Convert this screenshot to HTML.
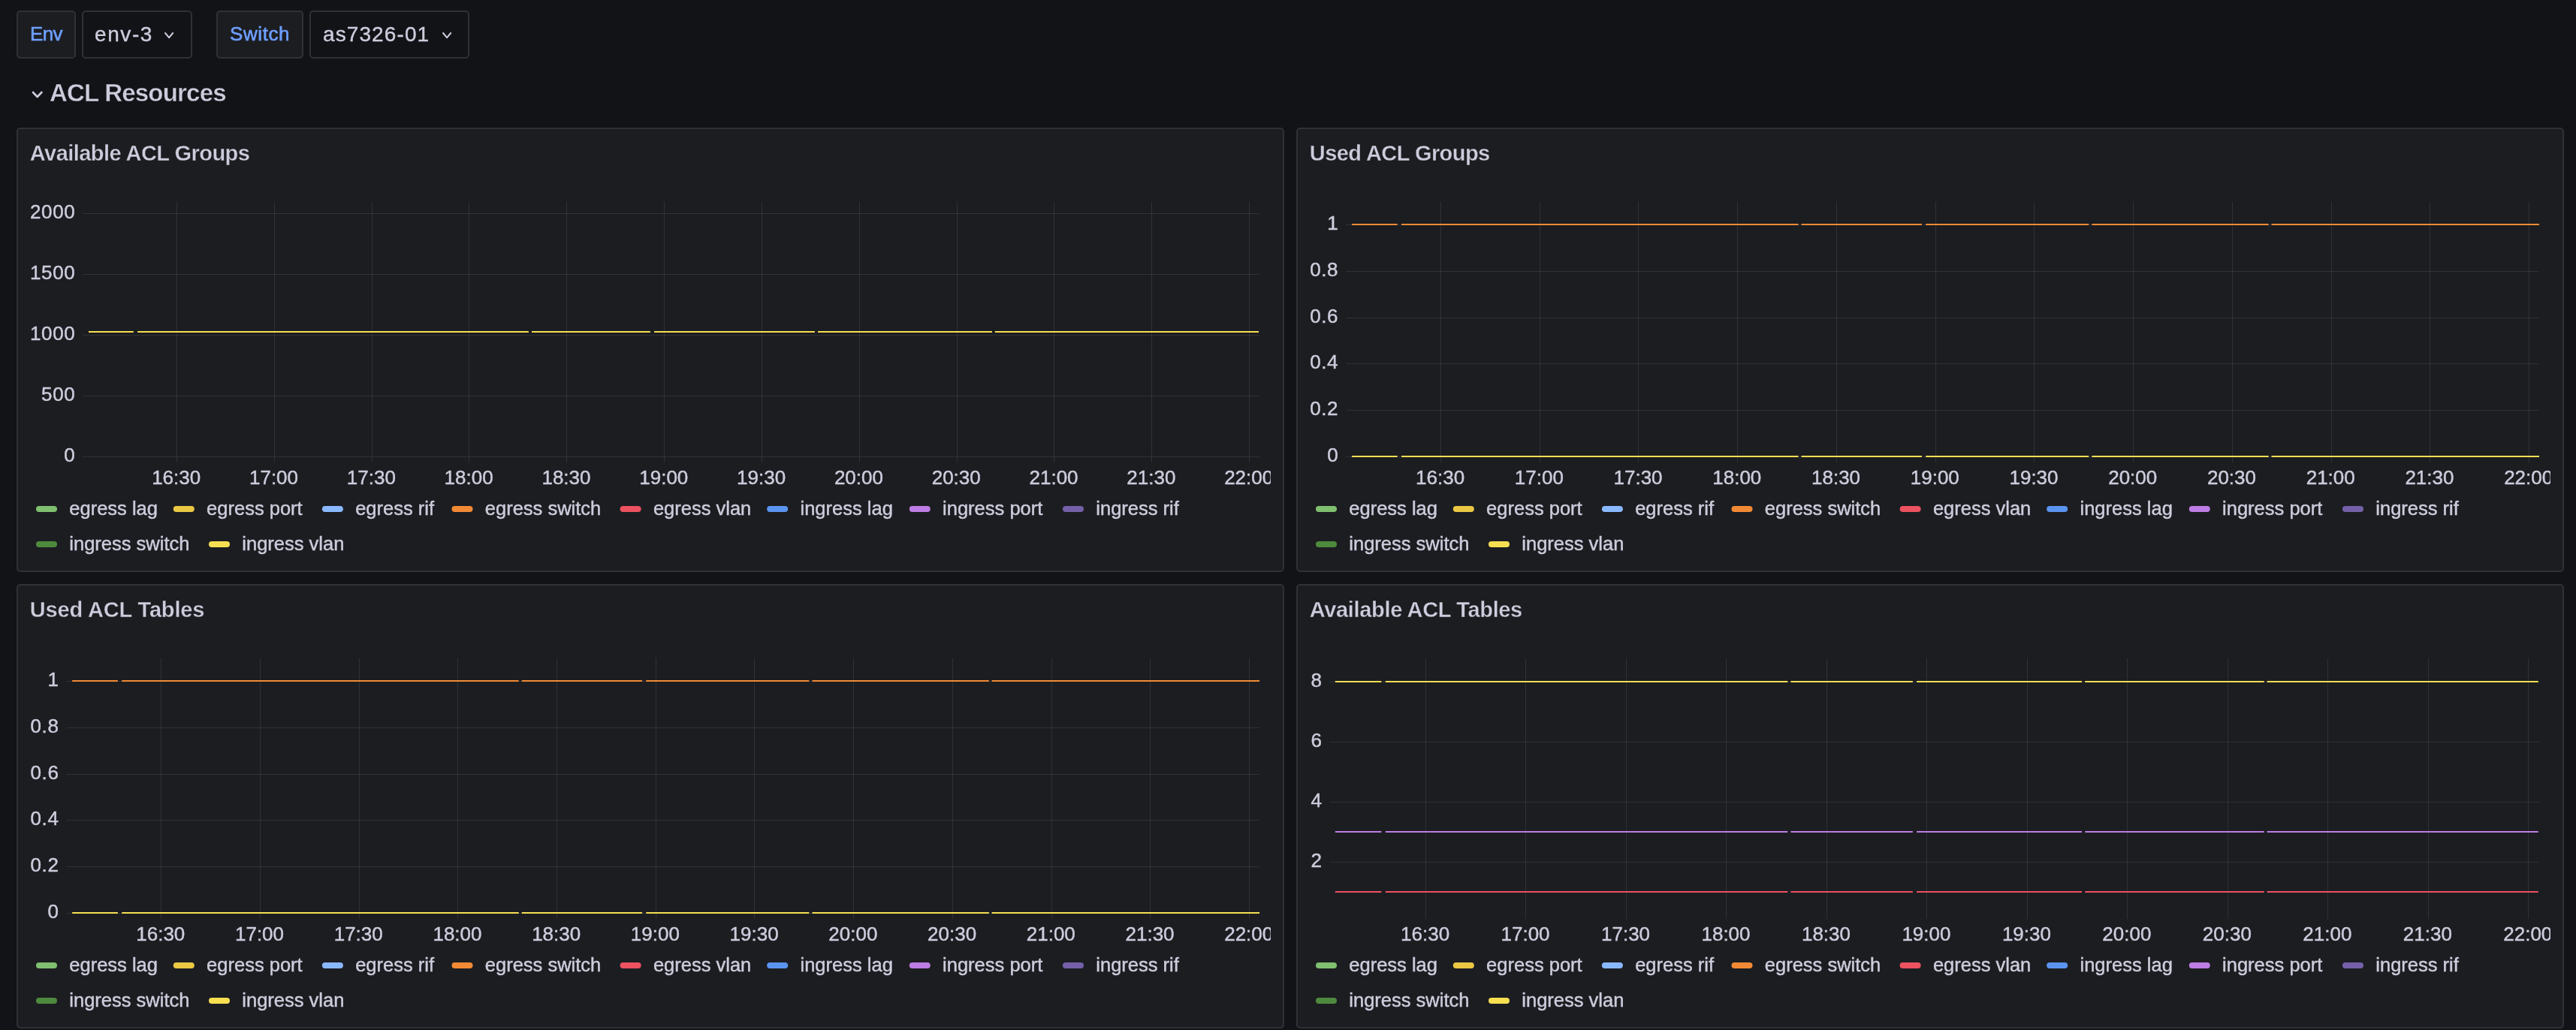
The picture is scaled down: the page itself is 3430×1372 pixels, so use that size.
<!DOCTYPE html>
<html><head><meta charset="utf-8"><title>ACL Resources - Grafana</title>
<style>
html,body{-webkit-font-smoothing:antialiased;margin:0;padding:0;background:#121317;width:3430px;height:1372px;overflow:hidden;font-family:"Liberation Sans", sans-serif;color:#ccccdc}
.box{position:absolute;box-sizing:border-box;border:2px solid #303136;border-radius:5px}
.lbl{background:#1c1d21;}
.inp{background:#121317;}
.t{will-change:transform;position:absolute;white-space:nowrap;line-height:1}
.panel{will-change:transform;position:absolute;box-sizing:border-box;width:1688px;height:592px;background:#1c1d21;border:2px solid #303136;border-radius:5px;overflow:hidden}
.panel svg{left:-2px!important;top:-2px!important}
</style></head><body>

<div class="box lbl" style="left:22px;top:14px;width:79px;height:64px"></div>
<div class="t" style="left:40px;top:32px;font-size:26px;letter-spacing:-0.7px;color:#6e9fff;-webkit-text-stroke:0.6px #6e9fff">Env</div>
<div class="box inp" style="left:109px;top:14px;width:147px;height:64px"></div>
<div class="t" style="left:126px;top:32px;font-size:28px;letter-spacing:1.6px;-webkit-text-stroke:0.4px #ccccdc">env-3</div>
<svg style="position:absolute;left:217.8px;top:42.4px" width="14.2" height="10.2" viewBox="-2 -2 14.2 10.2"><path d="M0 0 L5.1 6.2 L10.2 0" fill="none" stroke="#ccccdc" stroke-width="2.0" stroke-linecap="round" stroke-linejoin="round"/></svg>
<div class="box lbl" style="left:288px;top:14px;width:116px;height:64px"></div>
<div class="t" style="left:306px;top:32px;font-size:26px;letter-spacing:0.6px;color:#6e9fff;-webkit-text-stroke:0.6px #6e9fff">Switch</div>
<div class="box inp" style="left:412px;top:14px;width:213px;height:64px"></div>
<div class="t" style="left:430px;top:32px;font-size:28px;letter-spacing:1.1px;-webkit-text-stroke:0.4px #ccccdc">as7326-01</div>
<svg style="position:absolute;left:587.6px;top:42.4px" width="14.2" height="10.2" viewBox="-2 -2 14.2 10.2"><path d="M0 0 L5.1 6.2 L10.2 0" fill="none" stroke="#ccccdc" stroke-width="2.0" stroke-linecap="round" stroke-linejoin="round"/></svg>
<svg style="position:absolute;left:42.1px;top:120.7px" width="15.4" height="10.0" viewBox="-2 -2 15.4 10.0"><path d="M0 0 L5.7 6.0 L11.4 0" fill="none" stroke="#ccccdc" stroke-width="2.6" stroke-linecap="round" stroke-linejoin="round"/></svg>
<div class="t" style="left:65.5px;top:106.9px;font-size:33px;letter-spacing:-0.8px;font-weight:bold;-webkit-text-stroke:0.4px #121317">ACL Resources</div>
<div class="panel" style="left:22px;top:170px">
<svg width="1688" height="592" viewBox="0 0 1688 592" style="position:absolute;left:0;top:0">
<defs><clipPath id="clip0"><rect x="0" y="0" width="1670" height="592"/></clipPath></defs>
<text x="17.8" y="44.4" letter-spacing="-0.55" font-family='"Liberation Sans", sans-serif' font-size="29" font-weight="bold" fill="#ccccdc" stroke="#1c1d21" stroke-width="0.35">Available ACL Groups</text>
<line x1="88.3" y1="114.5" x2="1655" y2="114.5" stroke="rgba(240,250,255,0.09)" stroke-width="1"/>
<line x1="88.3" y1="195.5" x2="1655" y2="195.5" stroke="rgba(240,250,255,0.09)" stroke-width="1"/>
<line x1="88.3" y1="276.5" x2="1655" y2="276.5" stroke="rgba(240,250,255,0.09)" stroke-width="1"/>
<line x1="88.3" y1="357.5" x2="1655" y2="357.5" stroke="rgba(240,250,255,0.09)" stroke-width="1"/>
<line x1="88.3" y1="438.5" x2="1655" y2="438.5" stroke="rgba(240,250,255,0.09)" stroke-width="1"/>
<line x1="213.5" y1="98.6" x2="213.5" y2="446" stroke="rgba(240,250,255,0.09)" stroke-width="1"/>
<line x1="343.5" y1="98.6" x2="343.5" y2="446" stroke="rgba(240,250,255,0.09)" stroke-width="1"/>
<line x1="473.5" y1="98.6" x2="473.5" y2="446" stroke="rgba(240,250,255,0.09)" stroke-width="1"/>
<line x1="602.5" y1="98.6" x2="602.5" y2="446" stroke="rgba(240,250,255,0.09)" stroke-width="1"/>
<line x1="732.5" y1="98.6" x2="732.5" y2="446" stroke="rgba(240,250,255,0.09)" stroke-width="1"/>
<line x1="862.5" y1="98.6" x2="862.5" y2="446" stroke="rgba(240,250,255,0.09)" stroke-width="1"/>
<line x1="992.5" y1="98.6" x2="992.5" y2="446" stroke="rgba(240,250,255,0.09)" stroke-width="1"/>
<line x1="1122.5" y1="98.6" x2="1122.5" y2="446" stroke="rgba(240,250,255,0.09)" stroke-width="1"/>
<line x1="1252.5" y1="98.6" x2="1252.5" y2="446" stroke="rgba(240,250,255,0.09)" stroke-width="1"/>
<line x1="1381.5" y1="98.6" x2="1381.5" y2="446" stroke="rgba(240,250,255,0.09)" stroke-width="1"/>
<line x1="1511.5" y1="98.6" x2="1511.5" y2="446" stroke="rgba(240,250,255,0.09)" stroke-width="1"/>
<line x1="1641.5" y1="98.6" x2="1641.5" y2="446" stroke="rgba(240,250,255,0.09)" stroke-width="1"/>
<text x="78.3" y="120.9" text-anchor="end" letter-spacing="0.6" font-family='"Liberation Sans", sans-serif' font-size="26" fill="#ccccdc" stroke="#ccccdc" stroke-width="0.45">2000</text>
<text x="78.3" y="201.9" text-anchor="end" letter-spacing="0.6" font-family='"Liberation Sans", sans-serif' font-size="26" fill="#ccccdc" stroke="#ccccdc" stroke-width="0.45">1500</text>
<text x="78.3" y="282.9" text-anchor="end" letter-spacing="0.6" font-family='"Liberation Sans", sans-serif' font-size="26" fill="#ccccdc" stroke="#ccccdc" stroke-width="0.45">1000</text>
<text x="78.3" y="363.9" text-anchor="end" letter-spacing="0.6" font-family='"Liberation Sans", sans-serif' font-size="26" fill="#ccccdc" stroke="#ccccdc" stroke-width="0.45">500</text>
<text x="78.3" y="444.9" text-anchor="end" letter-spacing="0.6" font-family='"Liberation Sans", sans-serif' font-size="26" fill="#ccccdc" stroke="#ccccdc" stroke-width="0.45">0</text>
<g clip-path="url(#clip0)">
<text x="212.7" y="475" text-anchor="middle" font-family='"Liberation Sans", sans-serif' font-size="26" fill="#ccccdc" stroke="#ccccdc" stroke-width="0.45">16:30</text>
<text x="342.52" y="475" text-anchor="middle" font-family='"Liberation Sans", sans-serif' font-size="26" fill="#ccccdc" stroke="#ccccdc" stroke-width="0.45">17:00</text>
<text x="472.34" y="475" text-anchor="middle" font-family='"Liberation Sans", sans-serif' font-size="26" fill="#ccccdc" stroke="#ccccdc" stroke-width="0.45">17:30</text>
<text x="602.15" y="475" text-anchor="middle" font-family='"Liberation Sans", sans-serif' font-size="26" fill="#ccccdc" stroke="#ccccdc" stroke-width="0.45">18:00</text>
<text x="731.97" y="475" text-anchor="middle" font-family='"Liberation Sans", sans-serif' font-size="26" fill="#ccccdc" stroke="#ccccdc" stroke-width="0.45">18:30</text>
<text x="861.79" y="475" text-anchor="middle" font-family='"Liberation Sans", sans-serif' font-size="26" fill="#ccccdc" stroke="#ccccdc" stroke-width="0.45">19:00</text>
<text x="991.61" y="475" text-anchor="middle" font-family='"Liberation Sans", sans-serif' font-size="26" fill="#ccccdc" stroke="#ccccdc" stroke-width="0.45">19:30</text>
<text x="1121.43" y="475" text-anchor="middle" font-family='"Liberation Sans", sans-serif' font-size="26" fill="#ccccdc" stroke="#ccccdc" stroke-width="0.45">20:00</text>
<text x="1251.25" y="475" text-anchor="middle" font-family='"Liberation Sans", sans-serif' font-size="26" fill="#ccccdc" stroke="#ccccdc" stroke-width="0.45">20:30</text>
<text x="1381.06" y="475" text-anchor="middle" font-family='"Liberation Sans", sans-serif' font-size="26" fill="#ccccdc" stroke="#ccccdc" stroke-width="0.45">21:00</text>
<text x="1510.88" y="475" text-anchor="middle" font-family='"Liberation Sans", sans-serif' font-size="26" fill="#ccccdc" stroke="#ccccdc" stroke-width="0.45">21:30</text>
<text x="1640.7" y="475" text-anchor="middle" font-family='"Liberation Sans", sans-serif' font-size="26" fill="#ccccdc" stroke="#ccccdc" stroke-width="0.45">22:00</text>
</g>
<line x1="95.97" y1="272" x2="155.8" y2="272" stroke="#f7df52" stroke-width="2"/>
<line x1="161.1" y1="272" x2="681.93" y2="272" stroke="#f7df52" stroke-width="2"/>
<line x1="685.95" y1="272" x2="843.94" y2="272" stroke="#f7df52" stroke-width="2"/>
<line x1="849.05" y1="272" x2="1062.94" y2="272" stroke="#f7df52" stroke-width="2"/>
<line x1="1067.05" y1="272" x2="1298.95" y2="272" stroke="#f7df52" stroke-width="2"/>
<line x1="1302.76" y1="272" x2="1654.05" y2="272" stroke="#f7df52" stroke-width="2"/>
<rect x="26" y="504" width="28" height="8" rx="4" fill="#7fbf6f"/><text x="70.3" y="516.2" font-family='"Liberation Sans", sans-serif' font-size="25.5" fill="#ccccdc" stroke="#ccccdc" stroke-width="0.45">egress lag</text>
<rect x="208.8" y="504" width="28" height="8" rx="4" fill="#eac843"/><text x="253.1" y="516.2" font-family='"Liberation Sans", sans-serif' font-size="25.5" fill="#ccccdc" stroke="#ccccdc" stroke-width="0.45">egress port</text>
<rect x="406.9" y="504" width="28" height="8" rx="4" fill="#8ab8ff"/><text x="451.2" y="516.2" font-family='"Liberation Sans", sans-serif' font-size="25.5" fill="#ccccdc" stroke="#ccccdc" stroke-width="0.45">egress rif</text>
<rect x="579.5" y="504" width="28" height="8" rx="4" fill="#f28a35"/><text x="623.8" y="516.2" font-family='"Liberation Sans", sans-serif' font-size="25.5" fill="#ccccdc" stroke="#ccccdc" stroke-width="0.45">egress switch</text>
<rect x="803.6" y="504" width="28" height="8" rx="4" fill="#ec5260"/><text x="847.9" y="516.2" font-family='"Liberation Sans", sans-serif' font-size="25.5" fill="#ccccdc" stroke="#ccccdc" stroke-width="0.45">egress vlan</text>
<rect x="999.2" y="504" width="28" height="8" rx="4" fill="#5b94f0"/><text x="1043.5" y="516.2" font-family='"Liberation Sans", sans-serif' font-size="25.5" fill="#ccccdc" stroke="#ccccdc" stroke-width="0.45">ingress lag</text>
<rect x="1188.8" y="504" width="28" height="8" rx="4" fill="#bd7de4"/><text x="1233.1" y="516.2" font-family='"Liberation Sans", sans-serif' font-size="25.5" fill="#ccccdc" stroke="#ccccdc" stroke-width="0.45">ingress port</text>
<rect x="1393" y="504" width="28" height="8" rx="4" fill="#7460a8"/><text x="1437.3" y="516.2" font-family='"Liberation Sans", sans-serif' font-size="25.5" fill="#ccccdc" stroke="#ccccdc" stroke-width="0.45">ingress rif</text>
<rect x="26" y="551" width="28" height="8" rx="4" fill="#4e8a3d"/><text x="70.3" y="563.2" font-family='"Liberation Sans", sans-serif' font-size="25.5" fill="#ccccdc" stroke="#ccccdc" stroke-width="0.45">ingress switch</text>
<rect x="256" y="551" width="28" height="8" rx="4" fill="#f7df52"/><text x="300.3" y="563.2" font-family='"Liberation Sans", sans-serif' font-size="25.5" fill="#ccccdc" stroke="#ccccdc" stroke-width="0.45">ingress vlan</text>
</svg>
</div>
<div class="panel" style="left:1726px;top:170px">
<svg width="1688" height="592" viewBox="0 0 1688 592" style="position:absolute;left:0;top:0">
<defs><clipPath id="clip1"><rect x="0" y="0" width="1670" height="592"/></clipPath></defs>
<text x="17.8" y="44.4" letter-spacing="-0.55" font-family='"Liberation Sans", sans-serif' font-size="29" font-weight="bold" fill="#ccccdc" stroke="#1c1d21" stroke-width="0.35">Used ACL Groups</text>
<line x1="66.2" y1="129.5" x2="1654.5" y2="129.5" stroke="rgba(240,250,255,0.09)" stroke-width="1"/>
<line x1="66.2" y1="191.5" x2="1654.5" y2="191.5" stroke="rgba(240,250,255,0.09)" stroke-width="1"/>
<line x1="66.2" y1="253.5" x2="1654.5" y2="253.5" stroke="rgba(240,250,255,0.09)" stroke-width="1"/>
<line x1="66.2" y1="314.5" x2="1654.5" y2="314.5" stroke="rgba(240,250,255,0.09)" stroke-width="1"/>
<line x1="66.2" y1="376.5" x2="1654.5" y2="376.5" stroke="rgba(240,250,255,0.09)" stroke-width="1"/>
<line x1="66.2" y1="438.5" x2="1654.5" y2="438.5" stroke="rgba(240,250,255,0.09)" stroke-width="1"/>
<line x1="192.5" y1="98.6" x2="192.5" y2="446" stroke="rgba(240,250,255,0.09)" stroke-width="1"/>
<line x1="324.5" y1="98.6" x2="324.5" y2="446" stroke="rgba(240,250,255,0.09)" stroke-width="1"/>
<line x1="455.5" y1="98.6" x2="455.5" y2="446" stroke="rgba(240,250,255,0.09)" stroke-width="1"/>
<line x1="587.5" y1="98.6" x2="587.5" y2="446" stroke="rgba(240,250,255,0.09)" stroke-width="1"/>
<line x1="719.5" y1="98.6" x2="719.5" y2="446" stroke="rgba(240,250,255,0.09)" stroke-width="1"/>
<line x1="851.5" y1="98.6" x2="851.5" y2="446" stroke="rgba(240,250,255,0.09)" stroke-width="1"/>
<line x1="982.5" y1="98.6" x2="982.5" y2="446" stroke="rgba(240,250,255,0.09)" stroke-width="1"/>
<line x1="1114.5" y1="98.6" x2="1114.5" y2="446" stroke="rgba(240,250,255,0.09)" stroke-width="1"/>
<line x1="1246.5" y1="98.6" x2="1246.5" y2="446" stroke="rgba(240,250,255,0.09)" stroke-width="1"/>
<line x1="1378.5" y1="98.6" x2="1378.5" y2="446" stroke="rgba(240,250,255,0.09)" stroke-width="1"/>
<line x1="1509.5" y1="98.6" x2="1509.5" y2="446" stroke="rgba(240,250,255,0.09)" stroke-width="1"/>
<line x1="1641.5" y1="98.6" x2="1641.5" y2="446" stroke="rgba(240,250,255,0.09)" stroke-width="1"/>
<text x="56.2" y="135.9" text-anchor="end" letter-spacing="0.6" font-family='"Liberation Sans", sans-serif' font-size="26" fill="#ccccdc" stroke="#ccccdc" stroke-width="0.45">1</text>
<text x="56.2" y="197.9" text-anchor="end" letter-spacing="0.6" font-family='"Liberation Sans", sans-serif' font-size="26" fill="#ccccdc" stroke="#ccccdc" stroke-width="0.45">0.8</text>
<text x="56.2" y="259.9" text-anchor="end" letter-spacing="0.6" font-family='"Liberation Sans", sans-serif' font-size="26" fill="#ccccdc" stroke="#ccccdc" stroke-width="0.45">0.6</text>
<text x="56.2" y="320.9" text-anchor="end" letter-spacing="0.6" font-family='"Liberation Sans", sans-serif' font-size="26" fill="#ccccdc" stroke="#ccccdc" stroke-width="0.45">0.4</text>
<text x="56.2" y="382.9" text-anchor="end" letter-spacing="0.6" font-family='"Liberation Sans", sans-serif' font-size="26" fill="#ccccdc" stroke="#ccccdc" stroke-width="0.45">0.2</text>
<text x="56.2" y="444.9" text-anchor="end" letter-spacing="0.6" font-family='"Liberation Sans", sans-serif' font-size="26" fill="#ccccdc" stroke="#ccccdc" stroke-width="0.45">0</text>
<g clip-path="url(#clip1)">
<text x="191.6" y="475" text-anchor="middle" font-family='"Liberation Sans", sans-serif' font-size="26" fill="#ccccdc" stroke="#ccccdc" stroke-width="0.45">16:30</text>
<text x="323.34" y="475" text-anchor="middle" font-family='"Liberation Sans", sans-serif' font-size="26" fill="#ccccdc" stroke="#ccccdc" stroke-width="0.45">17:00</text>
<text x="455.07" y="475" text-anchor="middle" font-family='"Liberation Sans", sans-serif' font-size="26" fill="#ccccdc" stroke="#ccccdc" stroke-width="0.45">17:30</text>
<text x="586.81" y="475" text-anchor="middle" font-family='"Liberation Sans", sans-serif' font-size="26" fill="#ccccdc" stroke="#ccccdc" stroke-width="0.45">18:00</text>
<text x="718.55" y="475" text-anchor="middle" font-family='"Liberation Sans", sans-serif' font-size="26" fill="#ccccdc" stroke="#ccccdc" stroke-width="0.45">18:30</text>
<text x="850.28" y="475" text-anchor="middle" font-family='"Liberation Sans", sans-serif' font-size="26" fill="#ccccdc" stroke="#ccccdc" stroke-width="0.45">19:00</text>
<text x="982.02" y="475" text-anchor="middle" font-family='"Liberation Sans", sans-serif' font-size="26" fill="#ccccdc" stroke="#ccccdc" stroke-width="0.45">19:30</text>
<text x="1113.75" y="475" text-anchor="middle" font-family='"Liberation Sans", sans-serif' font-size="26" fill="#ccccdc" stroke="#ccccdc" stroke-width="0.45">20:00</text>
<text x="1245.49" y="475" text-anchor="middle" font-family='"Liberation Sans", sans-serif' font-size="26" fill="#ccccdc" stroke="#ccccdc" stroke-width="0.45">20:30</text>
<text x="1377.23" y="475" text-anchor="middle" font-family='"Liberation Sans", sans-serif' font-size="26" fill="#ccccdc" stroke="#ccccdc" stroke-width="0.45">21:00</text>
<text x="1508.96" y="475" text-anchor="middle" font-family='"Liberation Sans", sans-serif' font-size="26" fill="#ccccdc" stroke="#ccccdc" stroke-width="0.45">21:30</text>
<text x="1640.7" y="475" text-anchor="middle" font-family='"Liberation Sans", sans-serif' font-size="26" fill="#ccccdc" stroke="#ccccdc" stroke-width="0.45">22:00</text>
</g>
<line x1="73.93" y1="129" x2="134.64" y2="129" stroke="#f28a35" stroke-width="2"/>
<line x1="140.02" y1="129" x2="668.55" y2="129" stroke="#f28a35" stroke-width="2"/>
<line x1="672.63" y1="129" x2="832.96" y2="129" stroke="#f28a35" stroke-width="2"/>
<line x1="838.14" y1="129" x2="1055.19" y2="129" stroke="#f28a35" stroke-width="2"/>
<line x1="1059.37" y1="129" x2="1294.69" y2="129" stroke="#f28a35" stroke-width="2"/>
<line x1="1298.56" y1="129" x2="1655.03" y2="129" stroke="#f28a35" stroke-width="2"/>
<line x1="73.93" y1="438" x2="134.64" y2="438" stroke="#f7df52" stroke-width="2"/>
<line x1="140.02" y1="438" x2="668.55" y2="438" stroke="#f7df52" stroke-width="2"/>
<line x1="672.63" y1="438" x2="832.96" y2="438" stroke="#f7df52" stroke-width="2"/>
<line x1="838.14" y1="438" x2="1055.19" y2="438" stroke="#f7df52" stroke-width="2"/>
<line x1="1059.37" y1="438" x2="1294.69" y2="438" stroke="#f7df52" stroke-width="2"/>
<line x1="1298.56" y1="438" x2="1655.03" y2="438" stroke="#f7df52" stroke-width="2"/>
<rect x="26" y="504" width="28" height="8" rx="4" fill="#7fbf6f"/><text x="70.3" y="516.2" font-family='"Liberation Sans", sans-serif' font-size="25.5" fill="#ccccdc" stroke="#ccccdc" stroke-width="0.45">egress lag</text>
<rect x="208.8" y="504" width="28" height="8" rx="4" fill="#eac843"/><text x="253.1" y="516.2" font-family='"Liberation Sans", sans-serif' font-size="25.5" fill="#ccccdc" stroke="#ccccdc" stroke-width="0.45">egress port</text>
<rect x="406.9" y="504" width="28" height="8" rx="4" fill="#8ab8ff"/><text x="451.2" y="516.2" font-family='"Liberation Sans", sans-serif' font-size="25.5" fill="#ccccdc" stroke="#ccccdc" stroke-width="0.45">egress rif</text>
<rect x="579.5" y="504" width="28" height="8" rx="4" fill="#f28a35"/><text x="623.8" y="516.2" font-family='"Liberation Sans", sans-serif' font-size="25.5" fill="#ccccdc" stroke="#ccccdc" stroke-width="0.45">egress switch</text>
<rect x="803.6" y="504" width="28" height="8" rx="4" fill="#ec5260"/><text x="847.9" y="516.2" font-family='"Liberation Sans", sans-serif' font-size="25.5" fill="#ccccdc" stroke="#ccccdc" stroke-width="0.45">egress vlan</text>
<rect x="999.2" y="504" width="28" height="8" rx="4" fill="#5b94f0"/><text x="1043.5" y="516.2" font-family='"Liberation Sans", sans-serif' font-size="25.5" fill="#ccccdc" stroke="#ccccdc" stroke-width="0.45">ingress lag</text>
<rect x="1188.8" y="504" width="28" height="8" rx="4" fill="#bd7de4"/><text x="1233.1" y="516.2" font-family='"Liberation Sans", sans-serif' font-size="25.5" fill="#ccccdc" stroke="#ccccdc" stroke-width="0.45">ingress port</text>
<rect x="1393" y="504" width="28" height="8" rx="4" fill="#7460a8"/><text x="1437.3" y="516.2" font-family='"Liberation Sans", sans-serif' font-size="25.5" fill="#ccccdc" stroke="#ccccdc" stroke-width="0.45">ingress rif</text>
<rect x="26" y="551" width="28" height="8" rx="4" fill="#4e8a3d"/><text x="70.3" y="563.2" font-family='"Liberation Sans", sans-serif' font-size="25.5" fill="#ccccdc" stroke="#ccccdc" stroke-width="0.45">ingress switch</text>
<rect x="256" y="551" width="28" height="8" rx="4" fill="#f7df52"/><text x="300.3" y="563.2" font-family='"Liberation Sans", sans-serif' font-size="25.5" fill="#ccccdc" stroke="#ccccdc" stroke-width="0.45">ingress vlan</text>
</svg>
</div>
<div class="panel" style="left:22px;top:778px">
<svg width="1688" height="592" viewBox="0 0 1688 592" style="position:absolute;left:0;top:0">
<defs><clipPath id="clip2"><rect x="0" y="0" width="1670" height="592"/></clipPath></defs>
<text x="17.8" y="44.4" letter-spacing="-0.15" font-family='"Liberation Sans", sans-serif' font-size="29" font-weight="bold" fill="#ccccdc" stroke="#1c1d21" stroke-width="0.35">Used ACL Tables</text>
<line x1="66.5" y1="129.5" x2="1655" y2="129.5" stroke="rgba(240,250,255,0.09)" stroke-width="1"/>
<line x1="66.5" y1="191.5" x2="1655" y2="191.5" stroke="rgba(240,250,255,0.09)" stroke-width="1"/>
<line x1="66.5" y1="253.5" x2="1655" y2="253.5" stroke="rgba(240,250,255,0.09)" stroke-width="1"/>
<line x1="66.5" y1="314.5" x2="1655" y2="314.5" stroke="rgba(240,250,255,0.09)" stroke-width="1"/>
<line x1="66.5" y1="376.5" x2="1655" y2="376.5" stroke="rgba(240,250,255,0.09)" stroke-width="1"/>
<line x1="66.5" y1="438.5" x2="1655" y2="438.5" stroke="rgba(240,250,255,0.09)" stroke-width="1"/>
<line x1="192.5" y1="98.6" x2="192.5" y2="446" stroke="rgba(240,250,255,0.09)" stroke-width="1"/>
<line x1="324.5" y1="98.6" x2="324.5" y2="446" stroke="rgba(240,250,255,0.09)" stroke-width="1"/>
<line x1="456.5" y1="98.6" x2="456.5" y2="446" stroke="rgba(240,250,255,0.09)" stroke-width="1"/>
<line x1="587.5" y1="98.6" x2="587.5" y2="446" stroke="rgba(240,250,255,0.09)" stroke-width="1"/>
<line x1="719.5" y1="98.6" x2="719.5" y2="446" stroke="rgba(240,250,255,0.09)" stroke-width="1"/>
<line x1="851.5" y1="98.6" x2="851.5" y2="446" stroke="rgba(240,250,255,0.09)" stroke-width="1"/>
<line x1="982.5" y1="98.6" x2="982.5" y2="446" stroke="rgba(240,250,255,0.09)" stroke-width="1"/>
<line x1="1114.5" y1="98.6" x2="1114.5" y2="446" stroke="rgba(240,250,255,0.09)" stroke-width="1"/>
<line x1="1246.5" y1="98.6" x2="1246.5" y2="446" stroke="rgba(240,250,255,0.09)" stroke-width="1"/>
<line x1="1378.5" y1="98.6" x2="1378.5" y2="446" stroke="rgba(240,250,255,0.09)" stroke-width="1"/>
<line x1="1509.5" y1="98.6" x2="1509.5" y2="446" stroke="rgba(240,250,255,0.09)" stroke-width="1"/>
<line x1="1641.5" y1="98.6" x2="1641.5" y2="446" stroke="rgba(240,250,255,0.09)" stroke-width="1"/>
<text x="56.5" y="135.9" text-anchor="end" letter-spacing="0.6" font-family='"Liberation Sans", sans-serif' font-size="26" fill="#ccccdc" stroke="#ccccdc" stroke-width="0.45">1</text>
<text x="56.5" y="197.9" text-anchor="end" letter-spacing="0.6" font-family='"Liberation Sans", sans-serif' font-size="26" fill="#ccccdc" stroke="#ccccdc" stroke-width="0.45">0.8</text>
<text x="56.5" y="259.9" text-anchor="end" letter-spacing="0.6" font-family='"Liberation Sans", sans-serif' font-size="26" fill="#ccccdc" stroke="#ccccdc" stroke-width="0.45">0.6</text>
<text x="56.5" y="320.9" text-anchor="end" letter-spacing="0.6" font-family='"Liberation Sans", sans-serif' font-size="26" fill="#ccccdc" stroke="#ccccdc" stroke-width="0.45">0.4</text>
<text x="56.5" y="382.9" text-anchor="end" letter-spacing="0.6" font-family='"Liberation Sans", sans-serif' font-size="26" fill="#ccccdc" stroke="#ccccdc" stroke-width="0.45">0.2</text>
<text x="56.5" y="444.9" text-anchor="end" letter-spacing="0.6" font-family='"Liberation Sans", sans-serif' font-size="26" fill="#ccccdc" stroke="#ccccdc" stroke-width="0.45">0</text>
<g clip-path="url(#clip2)">
<text x="191.8" y="475" text-anchor="middle" font-family='"Liberation Sans", sans-serif' font-size="26" fill="#ccccdc" stroke="#ccccdc" stroke-width="0.45">16:30</text>
<text x="323.52" y="475" text-anchor="middle" font-family='"Liberation Sans", sans-serif' font-size="26" fill="#ccccdc" stroke="#ccccdc" stroke-width="0.45">17:00</text>
<text x="455.25" y="475" text-anchor="middle" font-family='"Liberation Sans", sans-serif' font-size="26" fill="#ccccdc" stroke="#ccccdc" stroke-width="0.45">17:30</text>
<text x="586.97" y="475" text-anchor="middle" font-family='"Liberation Sans", sans-serif' font-size="26" fill="#ccccdc" stroke="#ccccdc" stroke-width="0.45">18:00</text>
<text x="718.69" y="475" text-anchor="middle" font-family='"Liberation Sans", sans-serif' font-size="26" fill="#ccccdc" stroke="#ccccdc" stroke-width="0.45">18:30</text>
<text x="850.41" y="475" text-anchor="middle" font-family='"Liberation Sans", sans-serif' font-size="26" fill="#ccccdc" stroke="#ccccdc" stroke-width="0.45">19:00</text>
<text x="982.14" y="475" text-anchor="middle" font-family='"Liberation Sans", sans-serif' font-size="26" fill="#ccccdc" stroke="#ccccdc" stroke-width="0.45">19:30</text>
<text x="1113.86" y="475" text-anchor="middle" font-family='"Liberation Sans", sans-serif' font-size="26" fill="#ccccdc" stroke="#ccccdc" stroke-width="0.45">20:00</text>
<text x="1245.58" y="475" text-anchor="middle" font-family='"Liberation Sans", sans-serif' font-size="26" fill="#ccccdc" stroke="#ccccdc" stroke-width="0.45">20:30</text>
<text x="1377.3" y="475" text-anchor="middle" font-family='"Liberation Sans", sans-serif' font-size="26" fill="#ccccdc" stroke="#ccccdc" stroke-width="0.45">21:00</text>
<text x="1509.03" y="475" text-anchor="middle" font-family='"Liberation Sans", sans-serif' font-size="26" fill="#ccccdc" stroke="#ccccdc" stroke-width="0.45">21:30</text>
<text x="1640.75" y="475" text-anchor="middle" font-family='"Liberation Sans", sans-serif' font-size="26" fill="#ccccdc" stroke="#ccccdc" stroke-width="0.45">22:00</text>
</g>
<line x1="74.15" y1="129" x2="134.85" y2="129" stroke="#f28a35" stroke-width="2"/>
<line x1="140.23" y1="129" x2="668.7" y2="129" stroke="#f28a35" stroke-width="2"/>
<line x1="672.78" y1="129" x2="833.09" y2="129" stroke="#f28a35" stroke-width="2"/>
<line x1="838.27" y1="129" x2="1055.31" y2="129" stroke="#f28a35" stroke-width="2"/>
<line x1="1059.48" y1="129" x2="1294.78" y2="129" stroke="#f28a35" stroke-width="2"/>
<line x1="1298.64" y1="129" x2="1655.08" y2="129" stroke="#f28a35" stroke-width="2"/>
<line x1="74.15" y1="438" x2="134.85" y2="438" stroke="#f7df52" stroke-width="2"/>
<line x1="140.23" y1="438" x2="668.7" y2="438" stroke="#f7df52" stroke-width="2"/>
<line x1="672.78" y1="438" x2="833.09" y2="438" stroke="#f7df52" stroke-width="2"/>
<line x1="838.27" y1="438" x2="1055.31" y2="438" stroke="#f7df52" stroke-width="2"/>
<line x1="1059.48" y1="438" x2="1294.78" y2="438" stroke="#f7df52" stroke-width="2"/>
<line x1="1298.64" y1="438" x2="1655.08" y2="438" stroke="#f7df52" stroke-width="2"/>
<rect x="26" y="504" width="28" height="8" rx="4" fill="#7fbf6f"/><text x="70.3" y="516.2" font-family='"Liberation Sans", sans-serif' font-size="25.5" fill="#ccccdc" stroke="#ccccdc" stroke-width="0.45">egress lag</text>
<rect x="208.8" y="504" width="28" height="8" rx="4" fill="#eac843"/><text x="253.1" y="516.2" font-family='"Liberation Sans", sans-serif' font-size="25.5" fill="#ccccdc" stroke="#ccccdc" stroke-width="0.45">egress port</text>
<rect x="406.9" y="504" width="28" height="8" rx="4" fill="#8ab8ff"/><text x="451.2" y="516.2" font-family='"Liberation Sans", sans-serif' font-size="25.5" fill="#ccccdc" stroke="#ccccdc" stroke-width="0.45">egress rif</text>
<rect x="579.5" y="504" width="28" height="8" rx="4" fill="#f28a35"/><text x="623.8" y="516.2" font-family='"Liberation Sans", sans-serif' font-size="25.5" fill="#ccccdc" stroke="#ccccdc" stroke-width="0.45">egress switch</text>
<rect x="803.6" y="504" width="28" height="8" rx="4" fill="#ec5260"/><text x="847.9" y="516.2" font-family='"Liberation Sans", sans-serif' font-size="25.5" fill="#ccccdc" stroke="#ccccdc" stroke-width="0.45">egress vlan</text>
<rect x="999.2" y="504" width="28" height="8" rx="4" fill="#5b94f0"/><text x="1043.5" y="516.2" font-family='"Liberation Sans", sans-serif' font-size="25.5" fill="#ccccdc" stroke="#ccccdc" stroke-width="0.45">ingress lag</text>
<rect x="1188.8" y="504" width="28" height="8" rx="4" fill="#bd7de4"/><text x="1233.1" y="516.2" font-family='"Liberation Sans", sans-serif' font-size="25.5" fill="#ccccdc" stroke="#ccccdc" stroke-width="0.45">ingress port</text>
<rect x="1393" y="504" width="28" height="8" rx="4" fill="#7460a8"/><text x="1437.3" y="516.2" font-family='"Liberation Sans", sans-serif' font-size="25.5" fill="#ccccdc" stroke="#ccccdc" stroke-width="0.45">ingress rif</text>
<rect x="26" y="551" width="28" height="8" rx="4" fill="#4e8a3d"/><text x="70.3" y="563.2" font-family='"Liberation Sans", sans-serif' font-size="25.5" fill="#ccccdc" stroke="#ccccdc" stroke-width="0.45">ingress switch</text>
<rect x="256" y="551" width="28" height="8" rx="4" fill="#f7df52"/><text x="300.3" y="563.2" font-family='"Liberation Sans", sans-serif' font-size="25.5" fill="#ccccdc" stroke="#ccccdc" stroke-width="0.45">ingress vlan</text>
</svg>
</div>
<div class="panel" style="left:1726px;top:778px">
<svg width="1688" height="592" viewBox="0 0 1688 592" style="position:absolute;left:0;top:0">
<defs><clipPath id="clip3"><rect x="0" y="0" width="1670" height="592"/></clipPath></defs>
<text x="17.8" y="44.4" letter-spacing="-0.35" font-family='"Liberation Sans", sans-serif' font-size="29" font-weight="bold" fill="#ccccdc" stroke="#1c1d21" stroke-width="0.35">Available ACL Tables</text>
<line x1="44.6" y1="130.5" x2="1654.5" y2="130.5" stroke="rgba(240,250,255,0.09)" stroke-width="1"/>
<line x1="44.6" y1="210.5" x2="1654.5" y2="210.5" stroke="rgba(240,250,255,0.09)" stroke-width="1"/>
<line x1="44.6" y1="290.5" x2="1654.5" y2="290.5" stroke="rgba(240,250,255,0.09)" stroke-width="1"/>
<line x1="44.6" y1="370.5" x2="1654.5" y2="370.5" stroke="rgba(240,250,255,0.09)" stroke-width="1"/>
<line x1="172.5" y1="98.6" x2="172.5" y2="446" stroke="rgba(240,250,255,0.09)" stroke-width="1"/>
<line x1="305.5" y1="98.6" x2="305.5" y2="446" stroke="rgba(240,250,255,0.09)" stroke-width="1"/>
<line x1="439.5" y1="98.6" x2="439.5" y2="446" stroke="rgba(240,250,255,0.09)" stroke-width="1"/>
<line x1="572.5" y1="98.6" x2="572.5" y2="446" stroke="rgba(240,250,255,0.09)" stroke-width="1"/>
<line x1="706.5" y1="98.6" x2="706.5" y2="446" stroke="rgba(240,250,255,0.09)" stroke-width="1"/>
<line x1="839.5" y1="98.6" x2="839.5" y2="446" stroke="rgba(240,250,255,0.09)" stroke-width="1"/>
<line x1="973.5" y1="98.6" x2="973.5" y2="446" stroke="rgba(240,250,255,0.09)" stroke-width="1"/>
<line x1="1106.5" y1="98.6" x2="1106.5" y2="446" stroke="rgba(240,250,255,0.09)" stroke-width="1"/>
<line x1="1240.5" y1="98.6" x2="1240.5" y2="446" stroke="rgba(240,250,255,0.09)" stroke-width="1"/>
<line x1="1373.5" y1="98.6" x2="1373.5" y2="446" stroke="rgba(240,250,255,0.09)" stroke-width="1"/>
<line x1="1507.5" y1="98.6" x2="1507.5" y2="446" stroke="rgba(240,250,255,0.09)" stroke-width="1"/>
<line x1="1640.5" y1="98.6" x2="1640.5" y2="446" stroke="rgba(240,250,255,0.09)" stroke-width="1"/>
<text x="34.6" y="136.9" text-anchor="end" letter-spacing="0.6" font-family='"Liberation Sans", sans-serif' font-size="26" fill="#ccccdc" stroke="#ccccdc" stroke-width="0.45">8</text>
<text x="34.6" y="216.9" text-anchor="end" letter-spacing="0.6" font-family='"Liberation Sans", sans-serif' font-size="26" fill="#ccccdc" stroke="#ccccdc" stroke-width="0.45">6</text>
<text x="34.6" y="296.9" text-anchor="end" letter-spacing="0.6" font-family='"Liberation Sans", sans-serif' font-size="26" fill="#ccccdc" stroke="#ccccdc" stroke-width="0.45">4</text>
<text x="34.6" y="376.9" text-anchor="end" letter-spacing="0.6" font-family='"Liberation Sans", sans-serif' font-size="26" fill="#ccccdc" stroke="#ccccdc" stroke-width="0.45">2</text>
<g clip-path="url(#clip3)">
<text x="171.6" y="475" text-anchor="middle" font-family='"Liberation Sans", sans-serif' font-size="26" fill="#ccccdc" stroke="#ccccdc" stroke-width="0.45">16:30</text>
<text x="305.07" y="475" text-anchor="middle" font-family='"Liberation Sans", sans-serif' font-size="26" fill="#ccccdc" stroke="#ccccdc" stroke-width="0.45">17:00</text>
<text x="438.55" y="475" text-anchor="middle" font-family='"Liberation Sans", sans-serif' font-size="26" fill="#ccccdc" stroke="#ccccdc" stroke-width="0.45">17:30</text>
<text x="572.02" y="475" text-anchor="middle" font-family='"Liberation Sans", sans-serif' font-size="26" fill="#ccccdc" stroke="#ccccdc" stroke-width="0.45">18:00</text>
<text x="705.49" y="475" text-anchor="middle" font-family='"Liberation Sans", sans-serif' font-size="26" fill="#ccccdc" stroke="#ccccdc" stroke-width="0.45">18:30</text>
<text x="838.96" y="475" text-anchor="middle" font-family='"Liberation Sans", sans-serif' font-size="26" fill="#ccccdc" stroke="#ccccdc" stroke-width="0.45">19:00</text>
<text x="972.44" y="475" text-anchor="middle" font-family='"Liberation Sans", sans-serif' font-size="26" fill="#ccccdc" stroke="#ccccdc" stroke-width="0.45">19:30</text>
<text x="1105.91" y="475" text-anchor="middle" font-family='"Liberation Sans", sans-serif' font-size="26" fill="#ccccdc" stroke="#ccccdc" stroke-width="0.45">20:00</text>
<text x="1239.38" y="475" text-anchor="middle" font-family='"Liberation Sans", sans-serif' font-size="26" fill="#ccccdc" stroke="#ccccdc" stroke-width="0.45">20:30</text>
<text x="1372.85" y="475" text-anchor="middle" font-family='"Liberation Sans", sans-serif' font-size="26" fill="#ccccdc" stroke="#ccccdc" stroke-width="0.45">21:00</text>
<text x="1506.33" y="475" text-anchor="middle" font-family='"Liberation Sans", sans-serif' font-size="26" fill="#ccccdc" stroke="#ccccdc" stroke-width="0.45">21:30</text>
<text x="1639.8" y="475" text-anchor="middle" font-family='"Liberation Sans", sans-serif' font-size="26" fill="#ccccdc" stroke="#ccccdc" stroke-width="0.45">22:00</text>
</g>
<line x1="51.86" y1="410" x2="113.37" y2="410" stroke="#ec5260" stroke-width="2"/>
<line x1="118.82" y1="410" x2="654.31" y2="410" stroke="#ec5260" stroke-width="2"/>
<line x1="658.45" y1="410" x2="820.89" y2="410" stroke="#ec5260" stroke-width="2"/>
<line x1="826.14" y1="410" x2="1046.06" y2="410" stroke="#ec5260" stroke-width="2"/>
<line x1="1050.28" y1="410" x2="1288.71" y2="410" stroke="#ec5260" stroke-width="2"/>
<line x1="1292.63" y1="410" x2="1653.8" y2="410" stroke="#ec5260" stroke-width="2"/>
<line x1="51.86" y1="330" x2="113.37" y2="330" stroke="#bd7de4" stroke-width="2"/>
<line x1="118.82" y1="330" x2="654.31" y2="330" stroke="#bd7de4" stroke-width="2"/>
<line x1="658.45" y1="330" x2="820.89" y2="330" stroke="#bd7de4" stroke-width="2"/>
<line x1="826.14" y1="330" x2="1046.06" y2="330" stroke="#bd7de4" stroke-width="2"/>
<line x1="1050.28" y1="330" x2="1288.71" y2="330" stroke="#bd7de4" stroke-width="2"/>
<line x1="1292.63" y1="330" x2="1653.8" y2="330" stroke="#bd7de4" stroke-width="2"/>
<line x1="51.86" y1="130" x2="113.37" y2="130" stroke="#f7df52" stroke-width="2"/>
<line x1="118.82" y1="130" x2="654.31" y2="130" stroke="#f7df52" stroke-width="2"/>
<line x1="658.45" y1="130" x2="820.89" y2="130" stroke="#f7df52" stroke-width="2"/>
<line x1="826.14" y1="130" x2="1046.06" y2="130" stroke="#f7df52" stroke-width="2"/>
<line x1="1050.28" y1="130" x2="1288.71" y2="130" stroke="#f7df52" stroke-width="2"/>
<line x1="1292.63" y1="130" x2="1653.8" y2="130" stroke="#f7df52" stroke-width="2"/>
<rect x="26" y="504" width="28" height="8" rx="4" fill="#7fbf6f"/><text x="70.3" y="516.2" font-family='"Liberation Sans", sans-serif' font-size="25.5" fill="#ccccdc" stroke="#ccccdc" stroke-width="0.45">egress lag</text>
<rect x="208.8" y="504" width="28" height="8" rx="4" fill="#eac843"/><text x="253.1" y="516.2" font-family='"Liberation Sans", sans-serif' font-size="25.5" fill="#ccccdc" stroke="#ccccdc" stroke-width="0.45">egress port</text>
<rect x="406.9" y="504" width="28" height="8" rx="4" fill="#8ab8ff"/><text x="451.2" y="516.2" font-family='"Liberation Sans", sans-serif' font-size="25.5" fill="#ccccdc" stroke="#ccccdc" stroke-width="0.45">egress rif</text>
<rect x="579.5" y="504" width="28" height="8" rx="4" fill="#f28a35"/><text x="623.8" y="516.2" font-family='"Liberation Sans", sans-serif' font-size="25.5" fill="#ccccdc" stroke="#ccccdc" stroke-width="0.45">egress switch</text>
<rect x="803.6" y="504" width="28" height="8" rx="4" fill="#ec5260"/><text x="847.9" y="516.2" font-family='"Liberation Sans", sans-serif' font-size="25.5" fill="#ccccdc" stroke="#ccccdc" stroke-width="0.45">egress vlan</text>
<rect x="999.2" y="504" width="28" height="8" rx="4" fill="#5b94f0"/><text x="1043.5" y="516.2" font-family='"Liberation Sans", sans-serif' font-size="25.5" fill="#ccccdc" stroke="#ccccdc" stroke-width="0.45">ingress lag</text>
<rect x="1188.8" y="504" width="28" height="8" rx="4" fill="#bd7de4"/><text x="1233.1" y="516.2" font-family='"Liberation Sans", sans-serif' font-size="25.5" fill="#ccccdc" stroke="#ccccdc" stroke-width="0.45">ingress port</text>
<rect x="1393" y="504" width="28" height="8" rx="4" fill="#7460a8"/><text x="1437.3" y="516.2" font-family='"Liberation Sans", sans-serif' font-size="25.5" fill="#ccccdc" stroke="#ccccdc" stroke-width="0.45">ingress rif</text>
<rect x="26" y="551" width="28" height="8" rx="4" fill="#4e8a3d"/><text x="70.3" y="563.2" font-family='"Liberation Sans", sans-serif' font-size="25.5" fill="#ccccdc" stroke="#ccccdc" stroke-width="0.45">ingress switch</text>
<rect x="256" y="551" width="28" height="8" rx="4" fill="#f7df52"/><text x="300.3" y="563.2" font-family='"Liberation Sans", sans-serif' font-size="25.5" fill="#ccccdc" stroke="#ccccdc" stroke-width="0.45">ingress vlan</text>
</svg>
</div>
</body></html>
